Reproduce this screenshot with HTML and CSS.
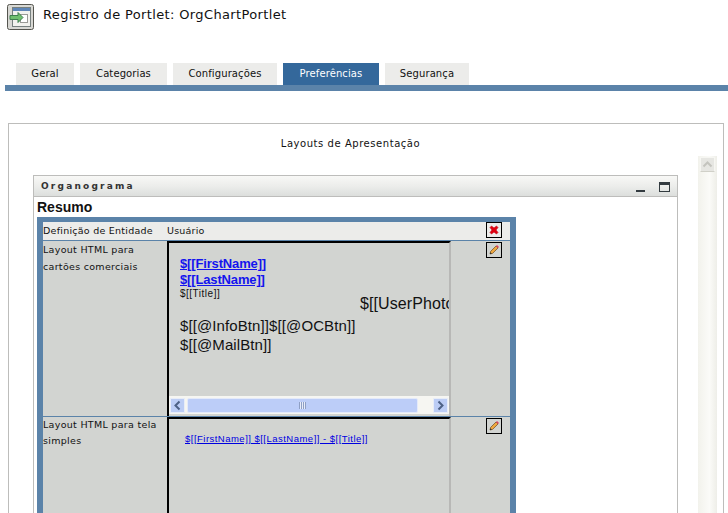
FILE: index.html
```html
<!DOCTYPE html>
<html lang="pt">
<head>
<meta charset="utf-8">
<title>Registro de Portlet</title>
<link rel="stylesheet" href="styles.css">
</head>
<body>
<header class="head">
  <span class="head-icon">
    <svg width="27" height="26" viewBox="0 0 27 26">
      <rect x="0.5" y="0.5" width="26" height="25" rx="2" fill="#d8d8d4" stroke="#55554f"/>
      <rect x="5.5" y="3.5" width="18" height="19" fill="#f2f2ee" stroke="#77807f"/>
      <rect x="6" y="4" width="17" height="3" fill="#5f86b8"/>
      <rect x="13.5" y="10.5" width="7" height="8" fill="#fff" stroke="#9a9a96"/>
      <path d="M3 11.5h8V8.5l5 5-5 5v-3H3z" fill="#6fbf6f" stroke="#3f7f4f"/>
    </svg>
  </span>
  <h1 class="head-title">Registro de Portlet: OrgChartPortlet</h1>
</header>
<nav class="tabs">
  <a class="tab tab-geral">Geral</a>
  <a class="tab tab-cat">Categorias</a>
  <a class="tab tab-conf">Configurações</a>
  <a class="tab tab-pref active">Preferências</a>
  <a class="tab tab-seg">Segurança</a>
</nav>
<main class="panel">
  <h2 class="panel-title">Layouts de Apresentação</h2>
  <div class="panel-body">
    <section class="portlet">
      <div class="portlet-bar">
        <span class="portlet-name">Organograma</span>
        <span class="win-min"></span>
        <span class="win-max"></span>
      </div>
      <div class="portlet-body">
        <h3 class="summary">Resumo</h3>
        <div class="frame">
          <div class="row row-first">
            <div class="label label-first">Definição de Entidade</div>
            <div class="value">Usuário</div>
            <div class="actions actions-first">
              <button class="icon-btn" type="button" aria-label="Excluir">
                <svg width="10" height="10" viewBox="0 0 10 10"><path d="M1 2.500L2.500 1 5 3 7.500 1 9 2.500 7 5l2 2.500L7.500 9 5 7 2.500 9 1 7.500 3 5z" fill="#e00010" stroke="#c00010" stroke-width=".6"/></svg>
              </button>
            </div>
          </div>
          <div class="row row-card">
            <div class="label">Layout HTML para<br>cartões comerciais</div>
            <div class="editor editor-card">
              <div class="editor-view">
                <a class="big-link">$[[FirstName]]</a>
                <a class="big-link">$[[LastName]]</a>
                <div class="small-text">$[[Title]]</div>
                <div class="photo">$[[UserPhoto]]</div>
                <div class="btns">$[[@InfoBtn]]$[[@OCBtn]]</div>
                <div class="btns">$[[@MailBtn]]</div>
              </div>
              <div class="hscroll">
                <span class="sb-btn"><svg width="9" height="11" viewBox="0 0 9 11"><path d="M6.500 1.500L2.500 5.500l4 4" fill="none" stroke="#4d6185" stroke-width="2"/></svg></span>
                <span class="sb-thumb"><span class="grip"></span></span>
                <span class="sb-btn"><svg width="9" height="11" viewBox="0 0 9 11"><path d="M2.500 1.500L6.500 5.500l-4 4" fill="none" stroke="#4d6185" stroke-width="2"/></svg></span>
              </div>
            </div>
            <div class="actions">
              <button class="icon-btn" type="button" aria-label="Editar">
                <svg width="12" height="12" viewBox="0 0 12 12"><path d="M2 10l.7-2.700L8 2l2 2-5.300 5.300z" fill="#f0a840" stroke="#6a4a20" stroke-width=".7"/><path d="M8 2l1-1 2 2-1 1z" fill="#e04060"/><path d="M2 10l.5-1.800 1.300 1.300z" fill="#222"/></svg>
              </button>
            </div>
          </div>
          <div class="row row-simple">
            <div class="label">Layout HTML para tela<br>simples</div>
            <div class="editor">
              <div class="editor-view editor-simple">
                <a class="small-link">$[[FirstName]] $[[LastName]] - $[[Title]]</a>
              </div>
            </div>
            <div class="actions">
              <button class="icon-btn" type="button" aria-label="Editar">
                <svg width="12" height="12" viewBox="0 0 12 12"><path d="M2 10l.7-2.700L8 2l2 2-5.300 5.300z" fill="#f0a840" stroke="#6a4a20" stroke-width=".7"/><path d="M8 2l1-1 2 2-1 1z" fill="#e04060"/><path d="M2 10l.5-1.800 1.300 1.300z" fill="#222"/></svg>
              </button>
            </div>
          </div>
        </div>
      </div>
    </section>
    <aside class="vscroll">
      <span class="vs-up"><svg width="11" height="7" viewBox="0 0 11 7"><path d="M1.500 5.500l4-4 4 4" fill="none" stroke="#c4c4be" stroke-width="2"/></svg></span>
    </aside>
  </div>
</main>
</body>
</html>
```
FILE: styles.css
```css
html, body {
  margin: 0;
  height: 513px;
  overflow: hidden;
  background: #fff;
}
body {
  font-family: "DejaVu Sans", sans-serif;
  font-size: 10px;
  color: #111;
}
.head {
  display: flex;
  align-items: flex-start;
  height: 63px;
  padding: 4px 0 0 7px;
  box-sizing: border-box;
}
.head-icon { display: block; height: 26px; }
.head-title {
  margin: 3px 0 0 9px;
  font-size: 13px;
  font-weight: 400;
  line-height: 16px;
  letter-spacing: .36px;
}
.tabs {
  display: flex;
  gap: 6px;
  height: 22px;
  margin-left: 5px;
  padding-left: 11px;
  border-bottom: 6px solid #5b83a9;
}
.tab {
  display: flex;
  align-items: center;
  justify-content: center;
  box-sizing: border-box;
  height: 22px;
  padding-bottom: 2px;
  background: #ececea;
  font-size: 10px;
  letter-spacing: .1px;
}
.tab-geral { width: 58px; }
.tab-cat { width: 87px; }
.tab-conf { width: 104px; }
.tab-pref { width: 96px; }
.tab-seg { width: 84px; }
.tab.active { background: #34689b; color: #fff; }
.panel {
  box-sizing: border-box;
  width: 716px;
  height: 420px;
  margin: 32px 0 0 8px;
  border: 1px solid #bdbdbb;
}
.panel-title {
  margin: 0;
  height: 32px;
  padding: 13px 31px 0 0;
  box-sizing: border-box;
  font-size: 10px;
  font-weight: 400;
  line-height: 14px;
  letter-spacing: .55px;
  text-align: center;
}
.panel-body {
  display: flex;
  align-items: flex-start;
  padding-left: 24px;
}
.portlet {
  box-sizing: border-box;
  width: 645px;
  margin-top: 19px;
  height: 400px;
  border: 1px solid #bdbdbb;
}
.portlet-bar {
  display: flex;
  align-items: center;
  height: 20px;
  background: linear-gradient(#f8f8f6, #ecedeb 50%, #dcdedc);
  border-bottom: 1px solid #bdbdbb;
  padding: 0 7px 0 7px;
}
.portlet-name {
  flex: 1;
  font-size: 9px;
  font-weight: 700;
  letter-spacing: 2.2px;
  color: #333;
}
.win-min {
  width: 9px;
  height: 2px;
  margin: 10px 14px 0 0;
  background: #333b40;
}
.win-max {
  box-sizing: border-box;
  width: 11px;
  height: 10px;
  margin-top: 2px;
  border: 1px solid #333b40;
  border-top-width: 3px;
}
.portlet-body { padding: 2px 0 0 3px; }
.summary {
  margin: 0;
  height: 18px;
  font-family: "Liberation Sans", sans-serif;
  font-size: 14px;
  font-weight: 700;
  line-height: 16px;
  color: #111;
}
.frame {
  box-sizing: border-box;
  width: 479px;
  height: 400px;
  border: 6px solid #5b83a9;
  border-top-width: 5px;
  border-bottom: 0;
  background: #d2d4d1;
}
.row {
  display: flex;
  border-bottom: 1px solid #5b83a9;
}
.row-first { height: 18px; background: #ececea; }
.row-card { height: 175px; }
.label {
  box-sizing: border-box;
  flex: 0 0 124px;
  font-size: 9.500px;
  line-height: 17px;
  letter-spacing: .3px;
}
.row-simple .label { line-height: 16px; }
.label-first { letter-spacing: .25px; }
.value {
  flex: 0 0 284px;
  font-size: 9.500px;
  line-height: 18px;
  letter-spacing: .2px;
}
.actions {
  flex: 1;
  padding: 1px 0 0 35px;
}
.actions-first { padding-top: 0; }
.icon-btn {
  display: flex;
  align-items: center;
  justify-content: center;
  box-sizing: border-box;
  width: 16px;
  height: 16px;
  padding: 0;
  background: transparent;
  border: 1px solid #000;
}
.editor {
  box-sizing: border-box;
  display: flex;
  flex-direction: column;
  flex: 0 0 284px;
  min-width: 0;
  border-left: 2px solid #000;
  border-right: 2px solid #b8b8b6;
  border-top: 2px solid #000;
  font-family: "Liberation Sans", sans-serif;
}
.row-simple .editor { height: 200px; }
.editor-view {
  flex: 1;
  overflow: hidden;
  padding: 13px 0 0 11px;
  white-space: nowrap;
}
.big-link {
  display: block;
  font-size: 13px;
  font-weight: 700;
  line-height: 16px;
  letter-spacing: -.15px;
  color: #1414ee;
  text-decoration: underline;
  width: fit-content;
}
.small-text {
  font-size: 10px;
  line-height: 11px;
  letter-spacing: .5px;
  color: #111;
}
.photo {
  font-size: 16px;
  line-height: 10px;
  height: 10px;
  letter-spacing: .1px;
  margin: 0 0 7px 180px;
}
.btns {
  font-size: 15px;
  line-height: 19px;
  letter-spacing: .1px;
}
.editor-simple { padding: 13px 0 0 16px; }
.small-link {
  font-size: 9.500px;
  line-height: 13px;
  color: #0000e0;
  text-decoration: underline;
  letter-spacing: .48px;
}
.hscroll {
  display: flex;
  align-items: center;
  gap: 2px;
  height: 18px;
  margin-bottom: 2px;
  padding: 0 1px;
  background: #f6f6f2;
}
.sb-btn {
  display: flex;
  align-items: center;
  justify-content: center;
  flex: none;
  width: 15px;
  height: 15px;
  background: #bccdf5;
  border: 1px solid #e8edf8;
  box-sizing: border-box;
}
.sb-thumb {
  display: flex;
  align-items: center;
  justify-content: center;
  flex: none;
  width: 231px;
  height: 15px;
  margin-right: 13px;
  box-sizing: border-box;
  background: #bccdf8;
  border: 1px solid #e4eafa;
  border-radius: 2px;
}
.grip {
  width: 7px;
  height: 7px;
  background: repeating-linear-gradient(90deg, #8e9fc4 0 1px, #e8edfa 1px 2px);
}
.vscroll {
  box-sizing: border-box;
  width: 19px;
  height: 400px;
  margin-left: 20px;
  padding: 1px 1px 0 2px;
  background: linear-gradient(90deg, #f2f2ec, #fbfbf8 60%, #eeeee8);
}
.vs-up {
  display: flex;
  align-items: center;
  justify-content: center;
  width: 15px;
  height: 15px;
  background: #e6e6e2;
  border: 1px solid #f6f6f2;
  border-bottom-color: #d0d0c8;
  box-sizing: border-box;
}
```
